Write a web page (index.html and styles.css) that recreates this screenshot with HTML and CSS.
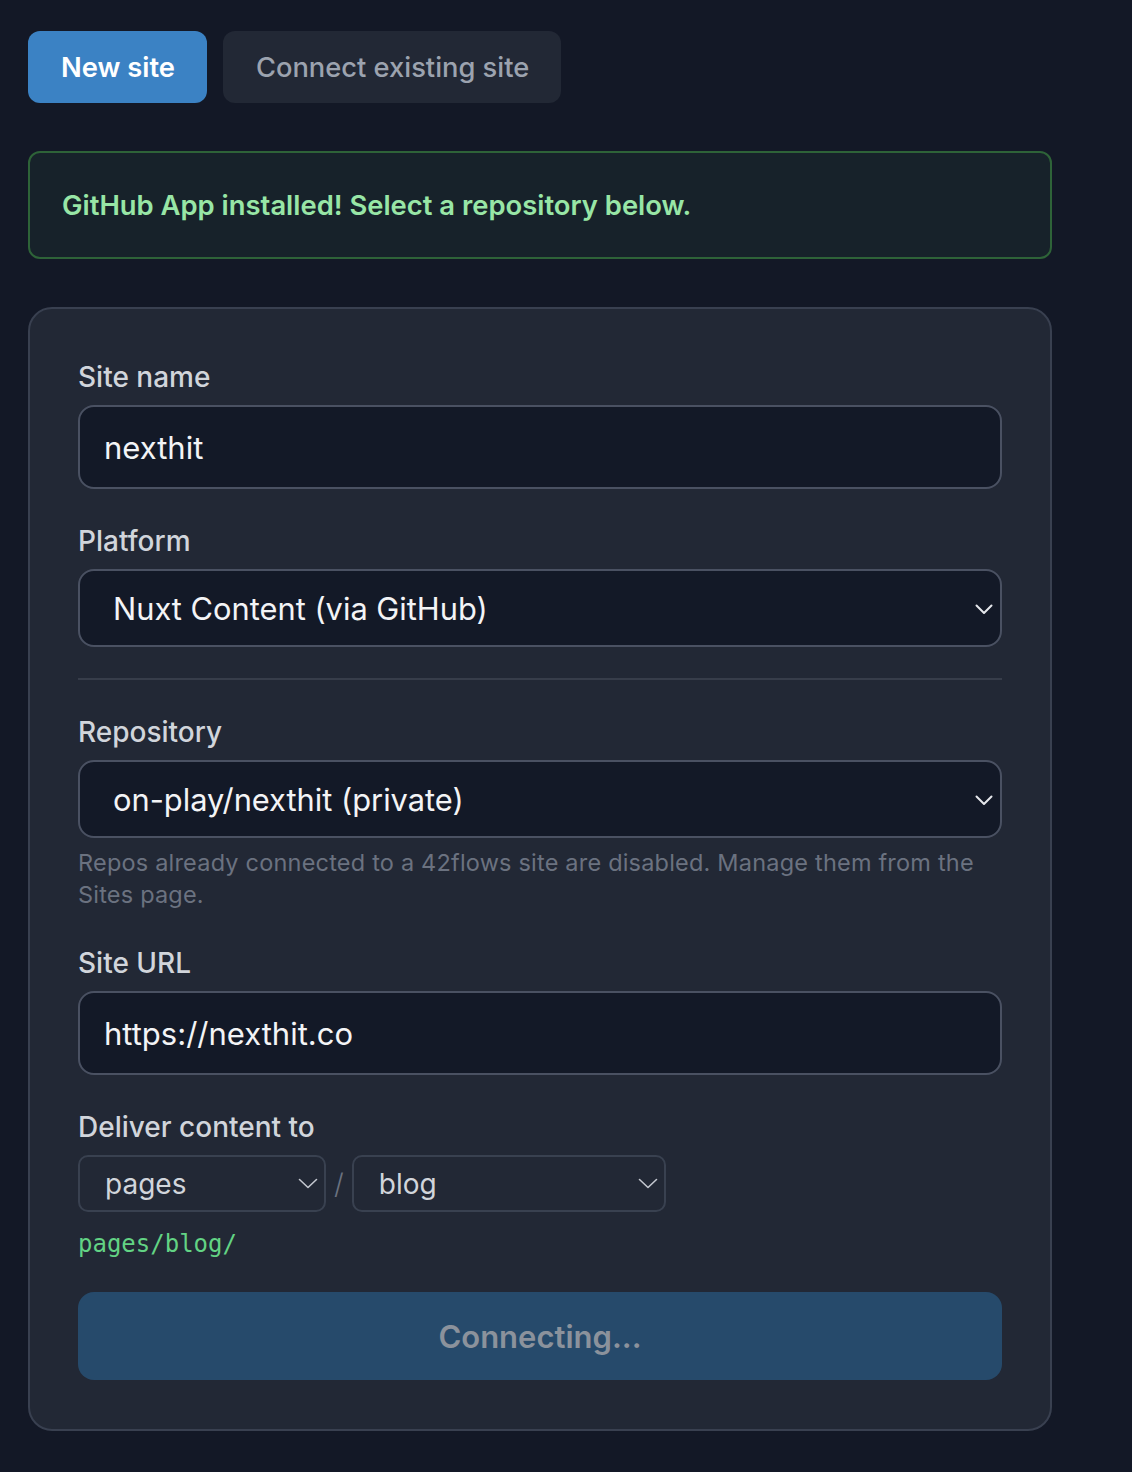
FILE: index.html
```html
<!DOCTYPE html>
<html lang="en">
<head>
<meta charset="utf-8">
<title>Connect site</title>
<link rel="stylesheet" href="styles.css">
</head>
<body>
<main class="page">
  <div class="tabs">
    <button class="tab tab-active">New site</button>
    <button class="tab">Connect existing site</button>
  </div>

  <div class="alert">GitHub App installed! Select a repository below.</div>

  <form class="card">
    <div class="field">
      <label class="label">Site name</label>
      <input class="input" type="text" value="nexthit">
    </div>

    <div class="field">
      <label class="label">Platform</label>
      <div class="select">
        <span>Nuxt Content (via GitHub)</span>
        <svg class="chev" width="18" height="11" viewBox="0 0 18 11"><path d="M1.5 1.5 L9 9 L16.5 1.5" fill="none" stroke="#e5e7eb" stroke-width="2" stroke-linecap="round" stroke-linejoin="round"/></svg>
      </div>
    </div>

    <hr class="divider">

    <div class="field field-first">
      <label class="label">Repository</label>
      <div class="select">
        <span>on-play/nexthit (private)</span>
        <svg class="chev" width="18" height="11" viewBox="0 0 18 11"><path d="M1.5 1.5 L9 9 L16.5 1.5" fill="none" stroke="#e5e7eb" stroke-width="2" stroke-linecap="round" stroke-linejoin="round"/></svg>
      </div>
      <p class="help">Repos already connected to a 42flows site are disabled. Manage them from the Sites page.</p>
    </div>

    <div class="field">
      <label class="label">Site URL</label>
      <input class="input" type="text" value="https://nexthit.co">
    </div>

    <div class="field">
      <label class="label">Deliver content to</label>
      <div class="path-row">
        <div class="mini-select mini-a">
          <span>pages</span>
          <svg width="20" height="11" viewBox="0 0 20 11"><path d="M1.5 1.5 L10 9.5 L18.5 1.5" fill="none" stroke="#c3c7cf" stroke-width="1.6" stroke-linecap="round" stroke-linejoin="round"/></svg>
        </div>
        <span class="slash">/</span>
        <div class="mini-select mini-b">
          <span>blog</span>
          <svg width="20" height="11" viewBox="0 0 20 11"><path d="M1.5 1.5 L10 9.5 L18.5 1.5" fill="none" stroke="#c3c7cf" stroke-width="1.6" stroke-linecap="round" stroke-linejoin="round"/></svg>
        </div>
      </div>
      <code class="path">pages/blog/</code>
    </div>

    <button class="submit" type="button" disabled>Connecting...</button>
  </form>
</main>
</body>
</html>
```

FILE: styles.css
```css
* { box-sizing: border-box; }

html, body {
  margin: 0;
  padding: 0;
  background: #131826;
}

body {
  font-family: Inter, "Noto Sans", "Liberation Sans", sans-serif;
  color: #d1d5db;
  min-height: 1472px;
}

.page {
  width: 1024px;
  margin-left: 28px;
  padding-top: 31px;
}

.tabs {
  display: flex;
  gap: 16px;
}

.tab {
  height: 72px;
  padding: 0 32px 0 33px;
  border: none;
  border-radius: 12px;
  background: #222835;
  color: #9ca3af;
  font-family: inherit;
  font-size: 27.3px;
  font-weight: 500;
}

.tab-active {
  background: #3b82c4;
  color: #ffffff;
  font-weight: 600;
}

.alert {
  margin-top: 48px;
  height: 108px;
  display: flex;
  align-items: center;
  padding-left: 32px;
  border: 2px solid #2e6338;
  border-radius: 12px;
  background: #17222a;
  color: #98e6a6;
  font-size: 27.4px;
  font-weight: 600;
}

.card {
  margin-top: 48px;
  padding: 48px 48px 49px;
  border: 2px solid #394050;
  border-radius: 24px;
  background: #222835;
}

.field {
  display: flex;
  flex-direction: column;
  margin-top: 32px;
}

.field:first-child,
.field-first {
  margin-top: 0;
}

.label {
  display: block;
  font-size: 28px;
  font-weight: 500;
  line-height: 38px;
  padding-top: 1px;
  color: #d1d5db;
  margin-bottom: 9px;
}

.input {
  height: 84px;
  width: 100%;
  padding: 0 24px;
  border: 2px solid #4a5162;
  border-radius: 16px;
  background: #131927;
  color: #f3f4f6;
  font-family: inherit;
  font-size: 31px;
  outline: none;
}

.select {
  height: 78px;
  display: flex;
  align-items: center;
  justify-content: space-between;
  padding: 0 7px 0 33px;
  border: 2px solid #4a5162;
  border-radius: 16px;
  background: #131927;
  color: #f3f4f6;
  font-size: 30.8px;
}

.chev {
  margin-top: 2px;
}

.divider {
  border: none;
  height: 2px;
  background: #373d4a;
  margin: 31px 0 32px;
}

.help {
  margin: 9px 0 0;
  font-size: 23.5px;
  line-height: 32px;
  color: #6b7280;
  letter-spacing: 0.2px;
}

.path-row {
  display: flex;
  align-items: center;
  gap: 8px;
}

.mini-select {
  height: 57px;
  display: flex;
  align-items: center;
  justify-content: space-between;
  padding: 0 6px 0 25px;
  border: 2px solid #394150;
  border-radius: 10px;
  background: #222835;
  color: #d1d5db;
  font-size: 28px;
}

.mini-a { width: 248px; }
.mini-b { width: 314px; }

.slash {
  color: #6b7280;
  font-size: 28px;
  font-weight: 300;
}

.path {
  margin-top: 16px;
  font-family: "DejaVu Sans Mono", "Liberation Mono", monospace;
  font-size: 24px;
  line-height: 32px;
  color: #62d384;
}

.submit {
  display: block;
  width: 100%;
  height: 88px;
  margin-top: 32px;
  border: none;
  border-radius: 16px;
  background: #264a6b;
  color: #8b929c;
  font-family: inherit;
  font-size: 31px;
  font-weight: 600;
}
```
